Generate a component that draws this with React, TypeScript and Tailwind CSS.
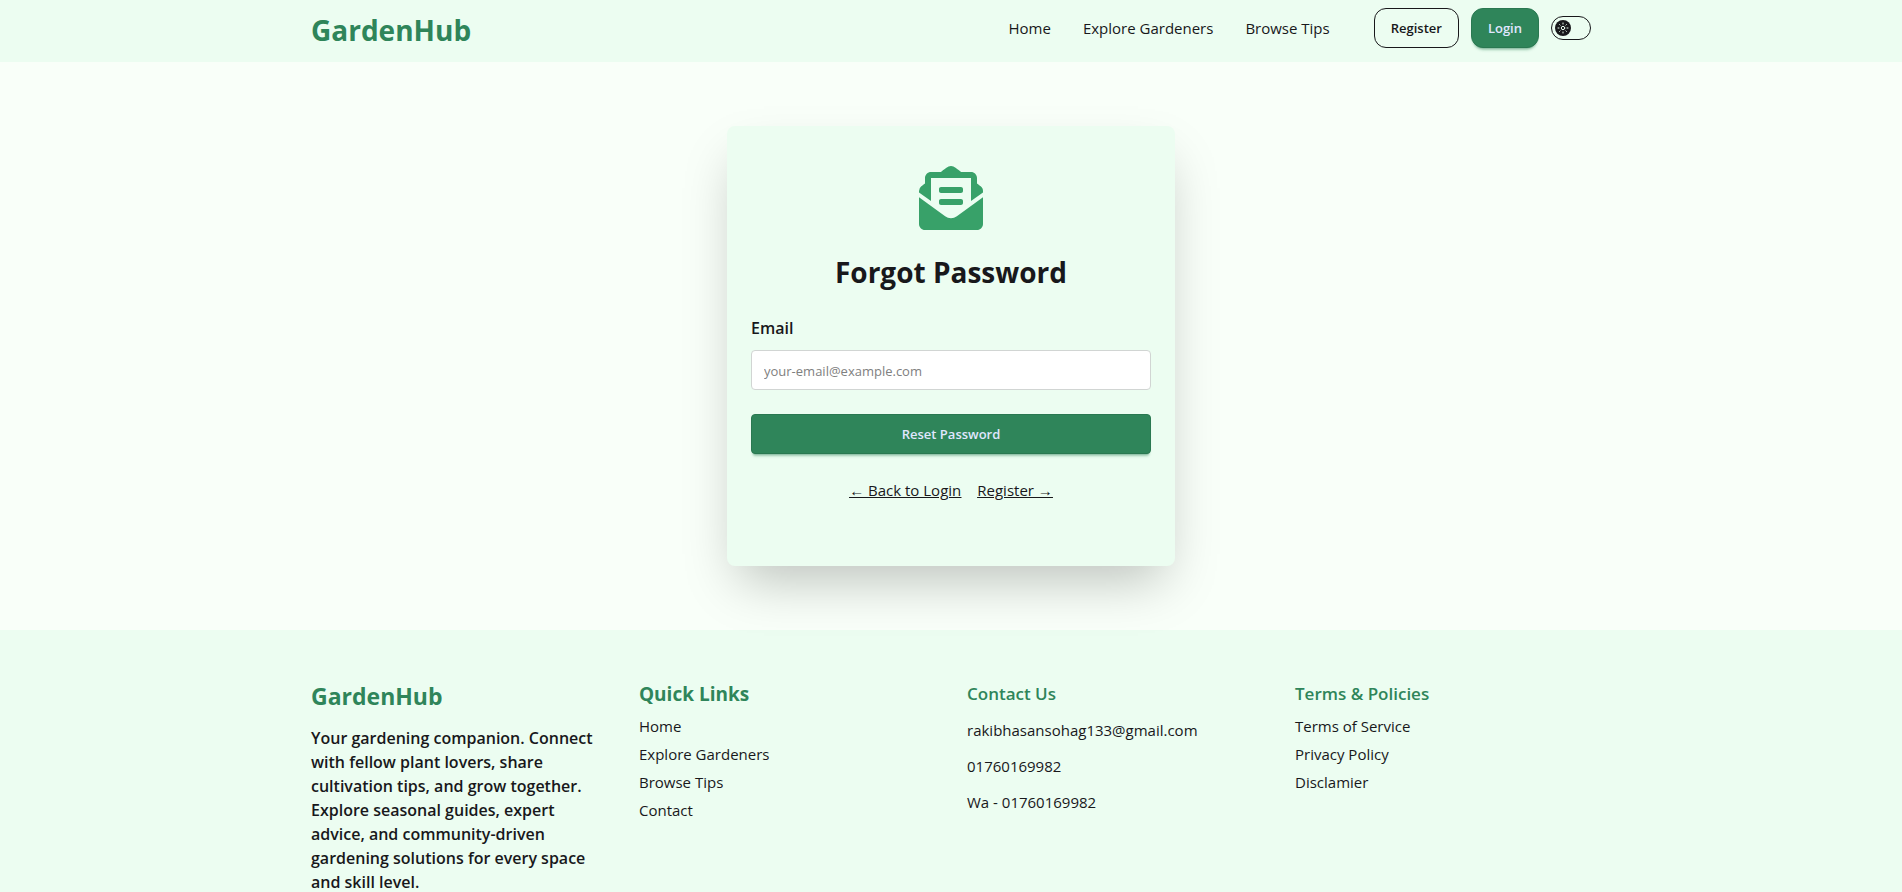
import { FaEnvelopeOpenText } from "react-icons/fa";

const navLinks = ["Home", "Explore Gardeners", "Browse Tips"];
const quickLinks = ["Home", "Explore Gardeners", "Browse Tips", "Contact"];
const contacts = ["rakibhasansohag133@gmail.com", "01760169982", "Wa - 01760169982"];
const policies = ["Terms of Service", "Privacy Policy", "Disclamier"];

function ThemeToggle() {
  return (
    <label className="flex h-6 w-10 cursor-pointer items-center rounded-full border border-[#18181b] p-[3px]">
      <input type="checkbox" aria-label="Toggle theme" className="sr-only" />
      <svg viewBox="0 0 16 16" className="size-4" aria-hidden="true">
        <circle cx="8" cy="8" r="8" fill="#18181b" />
        <g stroke="#ecfdf1" strokeWidth="1" strokeLinecap="round" fill="none">
          <circle cx="8" cy="8" r="1.7" />
          <path d="M8 3v1M8 12v1M3 8h1M12 8h1M4.6 4.6l.5.5M10.9 10.9l.5.5M4.6 11.4l.5-.5M10.9 5.1l.5-.5" />
        </g>
      </svg>
    </label>
  );
}

function Header() {
  return (
    <header className="bg-[#ecfdf1]">
      <div className="mx-auto flex max-w-7xl items-start justify-between pt-2 pb-3">
        <a href="#" className="pt-0.5 text-[28px] leading-10 font-bold text-[#2f855a]">
          GardenHub
        </a>
        <div className="flex items-center gap-3">
          <nav className="mr-8 flex gap-8 text-[15px] leading-6">
            {navLinks.map((label) => (
              <a key={label} href="#">
                {label}
              </a>
            ))}
          </nav>
          <button className="h-10 rounded-xl border border-[#18181b] px-4 pt-0.5 text-[13px] font-semibold">
            Register
          </button>
          <button className="h-10 rounded-xl border border-[#2a7851] bg-[#2f855a] px-4 pt-0.5 text-[13px] font-semibold text-[#e0e7ff] shadow-[0_3px_2px_-2px_#2f855a55,0_4px_3px_-2px_#2f855a55]">
            Login
          </button>
          <ThemeToggle />
        </div>
      </div>
    </header>
  );
}

function ForgotPassword() {
  return (
    <main className="flex justify-center px-4 py-16">
      <form className="flex w-full max-w-md flex-col rounded-lg bg-[#ecfdf1] px-6 pt-10 pb-16 shadow-2xl">
        <FaEnvelopeOpenText className="mx-auto size-16 text-[#38a169]" />
        <h1 className="mt-6 text-center text-[28px] leading-9 font-bold">Forgot Password</h1>
        <label htmlFor="email" className="mt-6 text-base leading-7 font-semibold">
          Email
        </label>
        <input
          id="email"
          type="email"
          placeholder="your-email@example.com"
          className="mt-2 h-10 rounded border border-[#d1d5d3] bg-white px-3 pt-0.5 text-[13px] placeholder:text-[#808080]"
        />
        <button
          type="button"
          className="mt-6 h-10 rounded border border-[#2a7851] bg-[#2f855a] pt-0.5 text-[13px] font-semibold text-[#e0e7ff] shadow-[0_3px_2px_-2px_#2f855a55,0_4px_3px_-2px_#2f855a55]"
        >
          Reset Password
        </button>
        <div className="mt-6 flex justify-center gap-4 text-[15px] leading-6 underline">
          <a href="#">← Back to Login</a>
          <a href="#">Register →</a>
        </div>
      </form>
    </main>
  );
}

function LinkList({ items }: { items: string[] }) {
  return (
    <ul className="mt-1 flex flex-col gap-1">
      {items.map((item) => (
        <li key={item}>
          <a href="#">{item}</a>
        </li>
      ))}
    </ul>
  );
}

function Footer() {
  return (
    <footer className="bg-[#ecfdf1] py-12">
      <div className="mx-auto grid max-w-7xl grid-cols-4 gap-8 text-[15px] leading-6">
        <div>
          <h2 className="text-[23px] leading-9 font-bold text-[#2f855a]">GardenHub</h2>
          <p className="mt-3 text-base leading-6 font-semibold">
            Your gardening companion. Connect with fellow plant lovers, share cultivation tips, and grow
            together. Explore seasonal guides, expert advice, and community-driven gardening solutions for
            every space and skill level.
          </p>
        </div>
        <div>
          <h3 className="text-[19px] leading-8 font-bold text-[#2f855a]">Quick Links</h3>
          <LinkList items={quickLinks} />
        </div>
        <div>
          <h3 className="text-[17px] leading-8 font-semibold text-[#2f855a]">Contact Us</h3>
          <ul className="mt-2 flex flex-col gap-3">
            {contacts.map((item) => (
              <li key={item}>{item}</li>
            ))}
          </ul>
        </div>
        <div>
          <h3 className="text-[17px] leading-8 font-semibold text-[#2f855a]">Terms &amp; Policies</h3>
          <LinkList items={policies} />
        </div>
      </div>
    </footer>
  );
}

export default function App() {
  return (
    <div className="min-h-screen bg-[#f9fff9] font-['Open_Sans','Noto_Sans',sans-serif] text-[#18181b]">
      <Header />
      <ForgotPassword />
      <Footer />
    </div>
  );
}
